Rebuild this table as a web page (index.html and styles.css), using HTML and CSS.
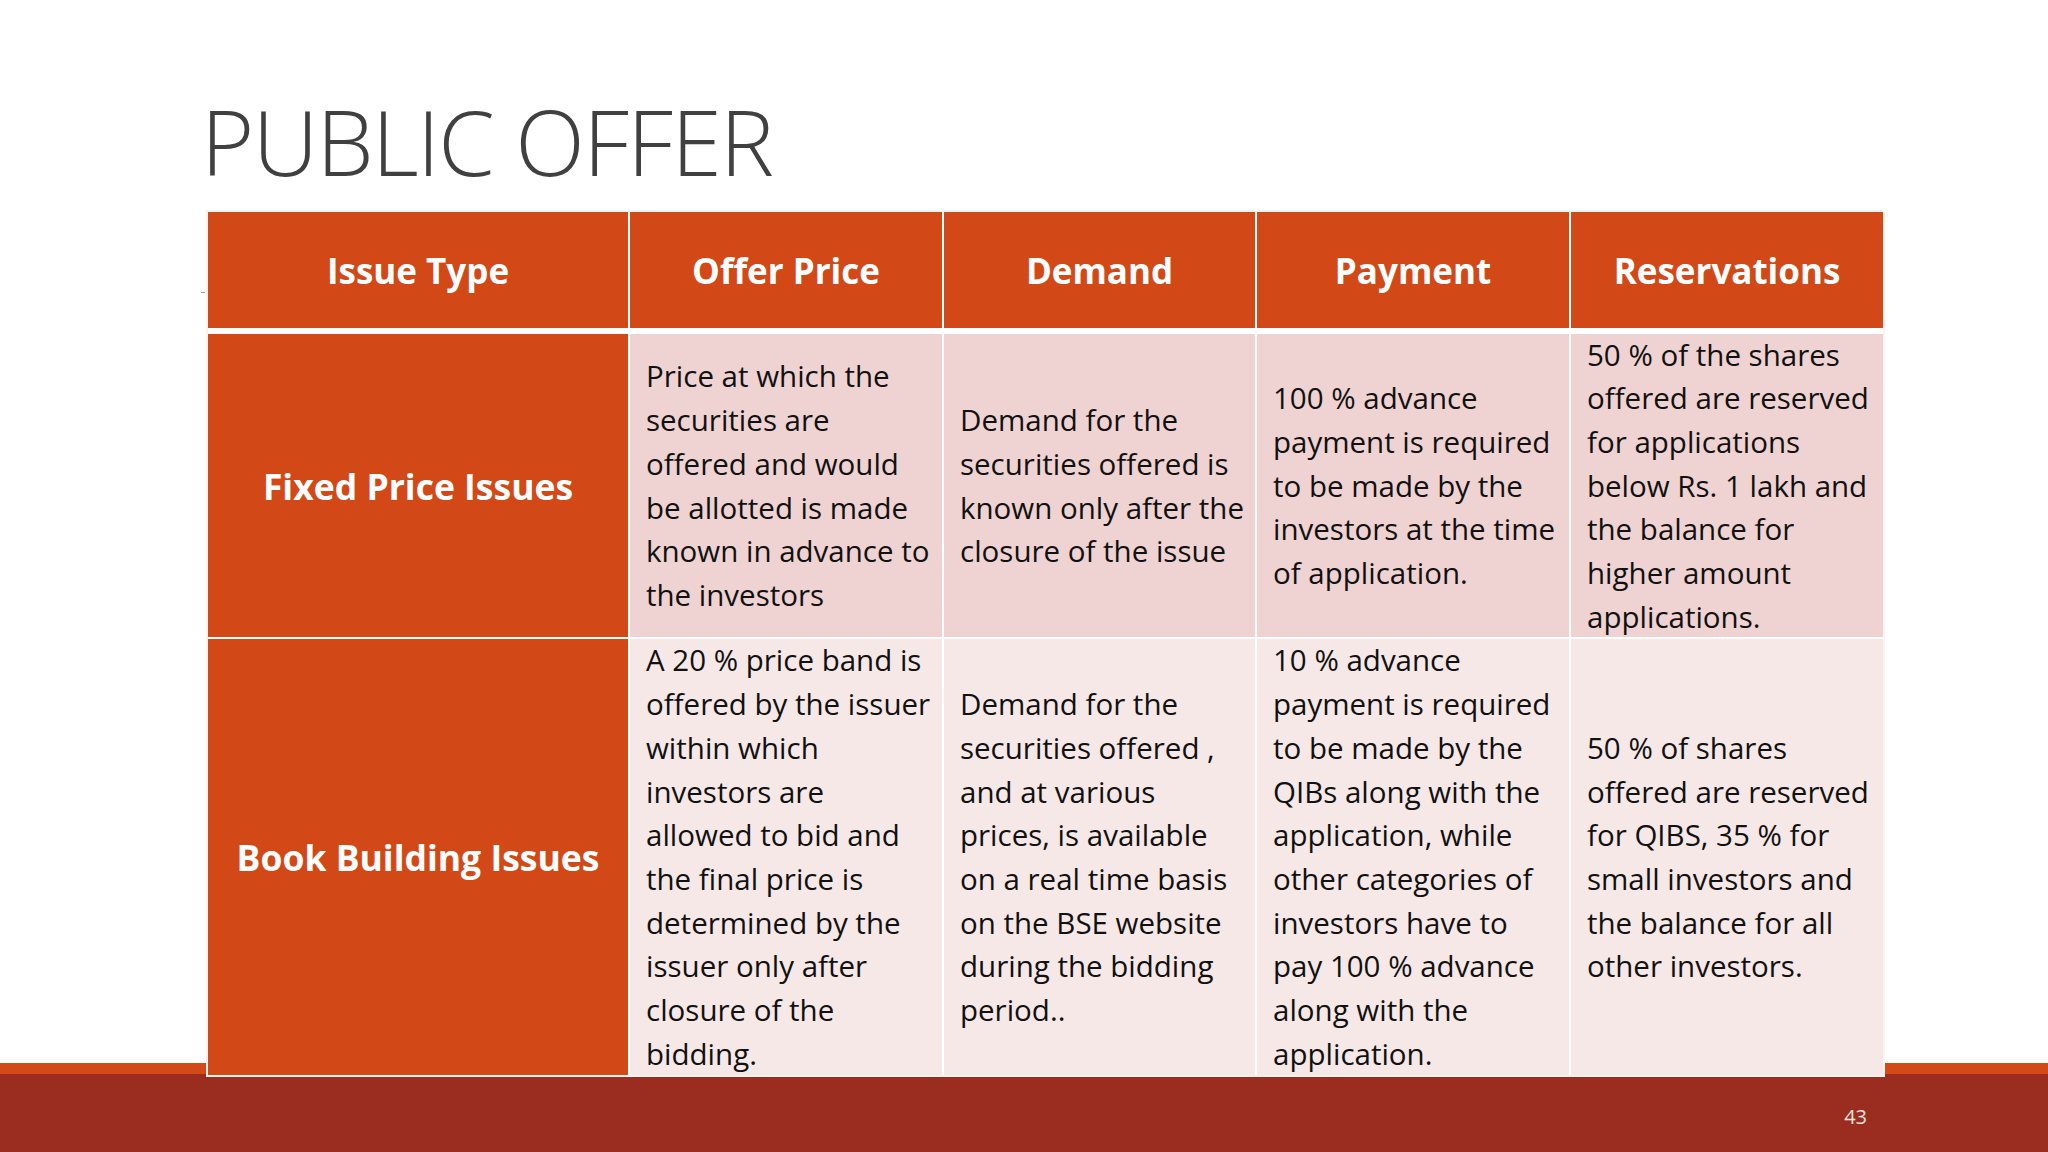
FILE: index.html
```html
<!DOCTYPE html>
<html lang="en">
<head>
<meta charset="utf-8">
<title>Public Offer</title>
<link rel="stylesheet" href="styles.css">
</head>
<body>
<div class="slide">
  <h1 class="title">PUBLIC OFFER</h1>
  <div class="grid">
    <div class="th">Issue Type</div>
    <div class="th">Offer Price</div>
    <div class="th">Demand</div>
    <div class="th">Payment</div>
    <div class="th">Reservations</div>

    <div class="rh">Fixed Price Issues</div>
    <div class="td r1">Price at which the<br>securities are<br>offered and would<br>be allotted is made<br>known in advance to<br>the investors</div>
    <div class="td r1">Demand for the<br>securities offered is<br>known only after the<br>closure of the issue</div>
    <div class="td r1">100 % advance<br>payment is required<br>to be made by the<br>investors at the time<br>of application.</div>
    <div class="td r1">50 % of the shares<br>offered are reserved<br>for applications<br>below Rs. 1 lakh and<br>the balance for<br>higher amount<br>applications.</div>

    <div class="rh">Book Building Issues</div>
    <div class="td r2">A 20 % price band is<br>offered by the issuer<br>within which<br>investors are<br>allowed to bid and<br>the final price is<br>determined by the<br>issuer only after<br>closure of the<br>bidding.</div>
    <div class="td r2">Demand for the<br>securities offered ,<br>and at various<br>prices, is available<br>on a real time basis<br>on the BSE website<br>during the bidding<br>period..</div>
    <div class="td r2">10 % advance<br>payment is required<br>to be made by the<br>QIBs along with the<br>application, while<br>other categories of<br>investors have to<br>pay 100 % advance<br>along with the<br>application.</div>
    <div class="td r2">50 % of shares<br>offered are reserved<br>for QIBS, 35 % for<br>small investors and<br>the balance for all<br>other investors.</div>
  </div>
  <div class="footer"><span class="pageno">43</span></div>
</div>
</body>
</html>
```

FILE: styles.css
```css
html, body {
  margin: 0;
  padding: 0;
}
body {
  width: 2048px;
  height: 1152px;
  overflow: hidden;
  font-family: "Open Sans", "Noto Sans", sans-serif;
}
.slide {
  width: 2048px;
  height: 1152px;
  box-sizing: border-box;
  padding-left: 206px;
  display: flex;
  flex-direction: column;
  background: linear-gradient(to bottom, #ffffff 0, #ffffff 1063px, #d24a18 1063px, #d24a18 1074px, #9b2d20 1074px, #9b2d20 100%);
}
.title {
  margin: 96px 0 0 -5px;
  font-weight: 300;
  font-size: 91px;
  line-height: 91px;
  height: 91px;
  letter-spacing: -1.6px;
  color: #404040;
}
.grid {
  position: relative;
  margin-top: 23px;
  width: 1679px;
  box-sizing: border-box;
  border: 2px solid #fbf3ef;
  background: #ffffff;
  display: grid;
  grid-template-columns: 420px 312px 311px 312px 312px;
  grid-template-rows: 120px 303px 436px;
  column-gap: 2px;
  row-gap: 2px;
}
.grid::before {
  content: "";
  position: absolute;
  left: -7px;
  top: 80px;
  width: 4px;
  height: 1px;
  background: #9a9a9a;
}
.th {
  margin-bottom: 4px;
  background: #d34817;
  color: #ffffff;
  font-weight: 700;
  font-size: 35px;
  display: flex;
  align-items: center;
  justify-content: center;
  white-space: nowrap;
}
.rh {
  background: #d34817;
  color: #ffffff;
  font-weight: 700;
  font-size: 35.5px;
  display: flex;
  align-items: center;
  justify-content: center;
  white-space: nowrap;
}
.td {
  display: flex;
  align-items: center;
  padding-left: 16px;
  font-size: 29.5px;
  line-height: 43.7px;
  color: #111111;
  white-space: nowrap;
}
.r1 {
  background: #efd3d2;
}
.r2 {
  background: #f6e8e7;
}
.footer {
  display: flex;
  justify-content: flex-end;
  width: 1661px;
  margin-top: 28px;
}
.pageno {
  font-size: 20px;
  line-height: 24px;
  color: #f5e2dc;
}
```
